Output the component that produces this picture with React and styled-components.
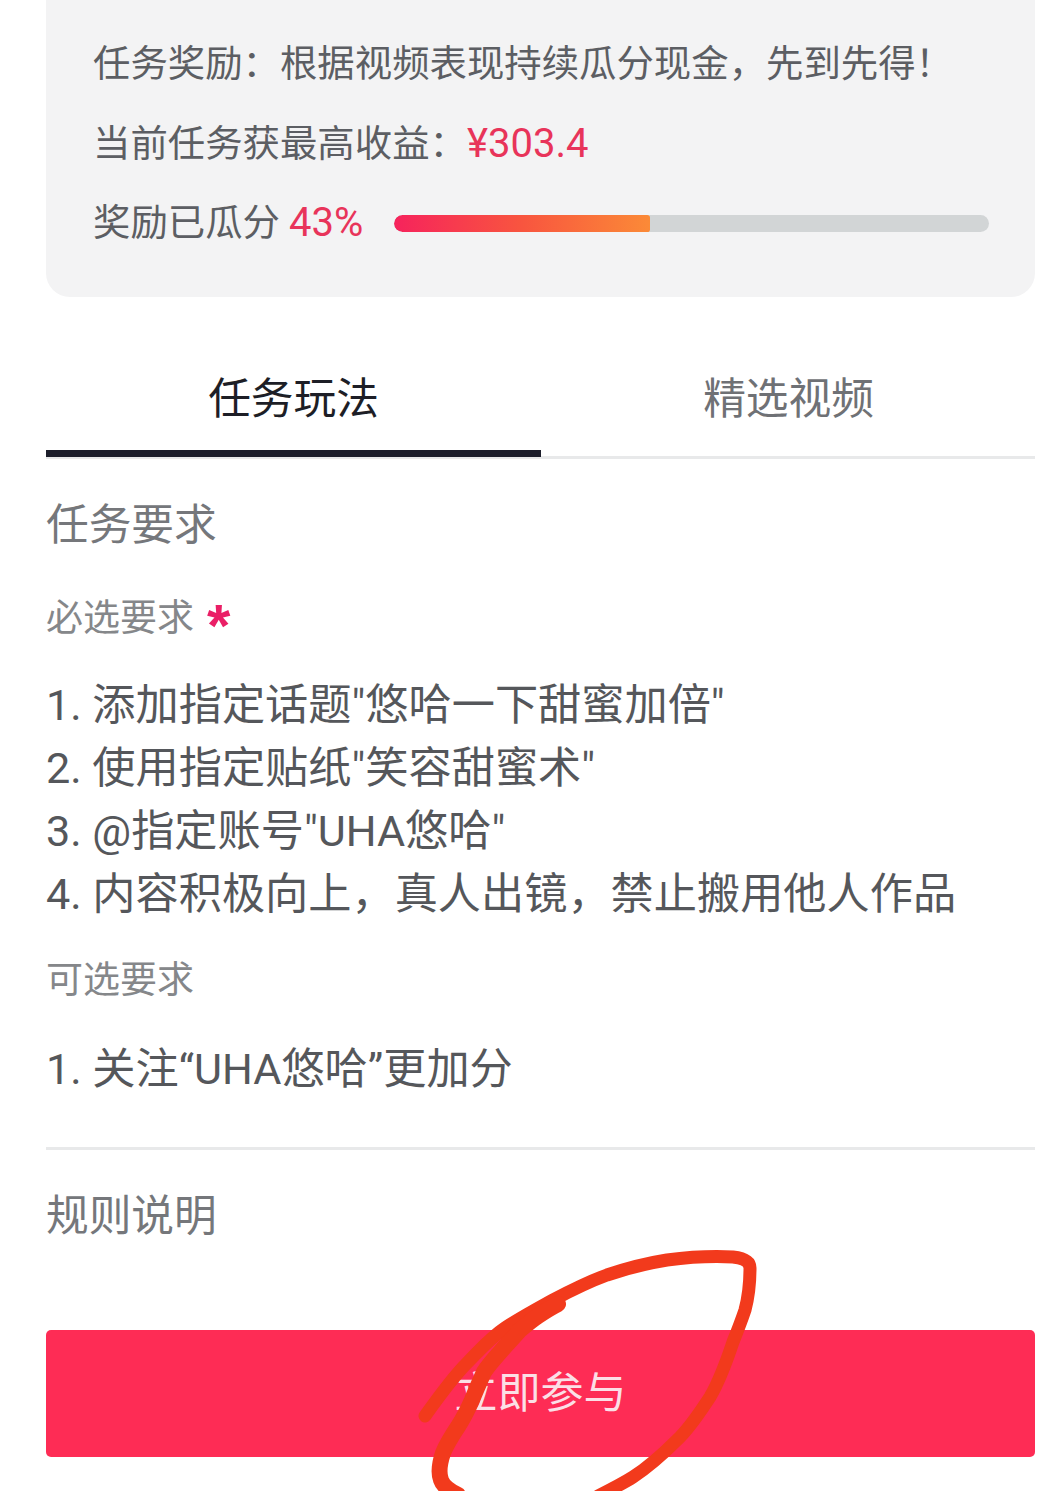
import React from 'react';
import styled, { createGlobalStyle } from 'styled-components';

const Global = createGlobalStyle`
  html, body { margin: 0; padding: 0; background: #fff; }
  body { font-family: Roboto, "Noto Sans CJK SC", "Noto Sans", sans-serif; }
`;

const Page = styled.div`
  position: relative;
  width: 1064px;
  height: 1491px;
  overflow: hidden;
  padding: 0 29px 0 46px;
  box-sizing: border-box;
  font-size: 37.4px;
  color: #5c5e63;
`;

const RewardCard = styled.section`
  margin-top: -24px;
  height: 321px;
  box-sizing: border-box;
  padding: 61px 46px 0 47px;
  background: #f3f3f4;
  border-radius: 24px;
  display: flex;
  flex-direction: column;
`;

const RewardLine = styled.div`
  height: 79.5px;
  line-height: 54px;
  white-space: nowrap;
  display: flex;
  align-items: flex-start;
`;

const Accent = styled.span`
  color: #e8345a;
  font-size: 40px;
  margin-left: ${p => p.$gap || 0}px;
`;

const Track = styled.div`
  flex: 1;
  height: 17px;
  margin: 19px 0 0 31px;
  background: #d2d5d6;
  border-radius: 9px;
  overflow: hidden;
`;

const Fill = styled.div`
  height: 100%;
  background: linear-gradient(90deg, #f6235c 0%, #f8553f 50%, #fb8a37 100%);
  border-radius: 9px 3px 3px 9px;
`;

const Tabs = styled.nav`
  display: flex;
  margin-top: 67px;
  height: 92px;
  border-bottom: 3px solid #e8e9ea;
`;

const Tab = styled.div`
  flex: 0 0 495px;
  text-align: center;
  font-size: 42.7px;
  line-height: 70px;
  height: 93px;
  box-sizing: border-box;
  color: ${p => (p.$active ? '#1d1e26' : '#6f7175')};
  border-bottom: ${p => (p.$active ? '7px solid #1d1e2b' : 'none')};
`;

const SectionTitle = styled.h2`
  margin: 0;
  font-weight: 400;
  font-size: 42.7px;
  line-height: 60px;
  color: #75777b;
`;

const RequirementsTitle = styled(SectionTitle)`
  margin-top: 36px;
`;

const SubTitle = styled.h3`
  margin: ${p => p.$top}px 0 0;
  font-weight: 400;
  font-size: 37px;
  line-height: 52px;
  color: #85878a;
  display: flex;
`;

const Star = styled.span`
  color: #ea1f66;
  font-size: 60px;
  font-weight: 700;
  line-height: 66px;
  height: 52px;
  margin-left: 13px;
  font-family: "Liberation Sans", sans-serif;
`;

const List = styled.ol`
  list-style: none;
  margin: ${p => p.$top}px 0 0;
  padding: 0;
  font-size: 43.2px;
  line-height: 63px;
  color: #55575b;
  white-space: nowrap;
`;

const Divider = styled.hr`
  border: 0;
  height: 3px;
  margin: 46px 0 0;
  background: #e8e9ea;
`;

const RulesTitle = styled(SectionTitle)`
  margin-top: 36px;
`;

const JoinButton = styled.button`
  display: block;
  width: 100%;
  height: 127px;
  margin-top: 84px;
  border: 0;
  border-radius: 5px;
  background: #fe2c55;
  color: #fbdfe6;
  font-family: inherit;
  font-size: 43px;
  line-height: 1;
  padding: 0;
`;

const Scribble = styled.svg`
  position: absolute;
  left: 0;
  top: 0;
  pointer-events: none;
`;

export default function App() {
  return (
    <Page>
      <Global />
      <RewardCard>
        <RewardLine>任务奖励：根据视频表现持续瓜分现金，先到先得！</RewardLine>
        <RewardLine>当前任务获最高收益：<Accent>¥303.4</Accent></RewardLine>
        <RewardLine>
          奖励已瓜分<Accent $gap={9}>43%</Accent>
          <Track><Fill style={{ width: '43%' }} /></Track>
        </RewardLine>
      </RewardCard>
      <Tabs>
        <Tab $active>任务玩法</Tab>
        <Tab>精选视频</Tab>
      </Tabs>
      <RequirementsTitle>任务要求</RequirementsTitle>
      <SubTitle $top={38}>必选要求<Star>*</Star></SubTitle>
      <List $top={29}>
        <li>1. 添加指定话题"悠哈一下甜蜜加倍"</li>
        <li>2. 使用指定贴纸"笑容甜蜜术"</li>
        <li>3. @指定账号"UHA悠哈"</li>
        <li>4. 内容积极向上，真人出镜，禁止搬用他人作品</li>
      </List>
      <SubTitle $top={29}>可选要求</SubTitle>
      <List $top={31}>
        <li>1. 关注“UHA悠哈”更加分</li>
      </List>
      <Divider />
      <RulesTitle>规则说明</RulesTitle>
      <JoinButton>立即参与</JoinButton>
      <Scribble width="1064" height="1491" viewBox="0 0 1064 1491" fill="none" stroke="#f23a1c" strokeLinecap="round" strokeLinejoin="round">
        <path strokeWidth="13" d="M425 1416 C 440 1395 452 1378 467 1363 C 480 1350 490 1338 505 1328 C 520 1318 535 1310 553 1300 C 570 1291 588 1282 607 1275 C 628 1268 648 1263 667 1260 C 690 1257 715 1256 733 1257 C 742 1258 750 1260 750 1268 C 750 1285 749 1295 745 1310 C 741 1322 737 1332 733 1342 C 727 1360 720 1380 710 1397 C 700 1412 690 1428 677 1440 C 665 1452 650 1466 633 1477 C 622 1484 610 1490 598 1496" />
        <path strokeWidth="16" d="M558 1304 C 550 1308 544 1312 538 1316 C 532 1320 526 1325 520 1330 C 514 1337 508 1343 502 1350 C 496 1357 490 1363 484 1372 C 480 1381 476 1390 472 1400 C 468 1409 464 1417 459 1425 C 453 1434 447 1443 443 1453 C 440 1462 438 1472 441 1480 C 443 1486 450 1491 458 1495" />
      </Scribble>
    </Page>
  );
}
